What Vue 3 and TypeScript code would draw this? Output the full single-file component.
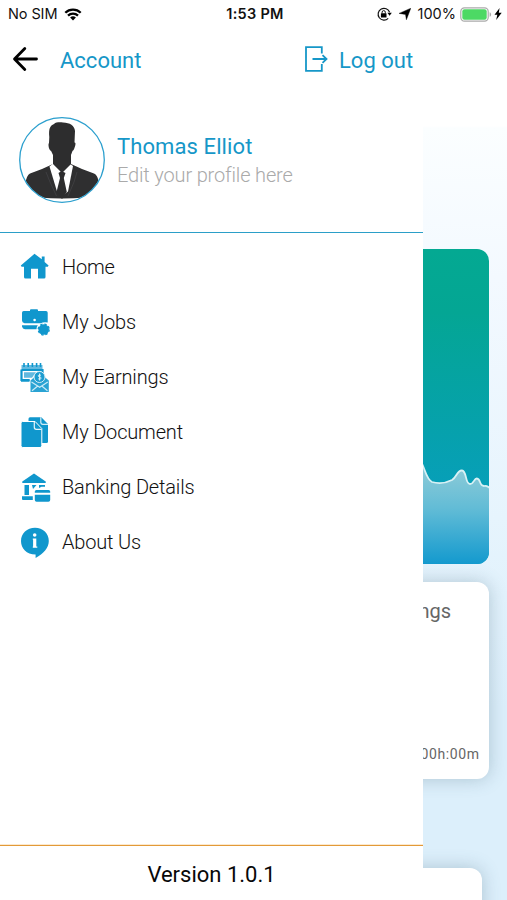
<script setup lang="ts">
type IconName = 'home' | 'jobs' | 'earnings' | 'document' | 'bank' | 'about'

interface MenuItem {
  label: string
  icon: IconName
}

const menu: MenuItem[] = [
  { label: 'Home', icon: 'home' },
  { label: 'My Jobs', icon: 'jobs' },
  { label: 'My Earnings', icon: 'earnings' },
  { label: 'My Document', icon: 'document' },
  { label: 'Banking Details', icon: 'bank' },
  { label: 'About Us', icon: 'about' },
]
</script>

<template>
  <div class="screen">
    <header class="status">
      <div class="status-left">
        <span class="carrier">No SIM</span>
        <svg class="wifi" viewBox="0 0 18 13" width="18" height="13">
          <path d="M1.3 4.700a11 11 0 0 1 15.400 0M4 7.600a7.200 7.200 0 0 1 10 0" fill="none" stroke="#000" stroke-width="2.300" />
          <path d="M6.100 9.600a4.200 4.200 0 0 1 5.800 0L9 12.500z" />
        </svg>
      </div>
      <span class="clock">1:53 PM</span>
      <div class="status-right">
        <svg viewBox="0 0 15 14" width="15" height="14">
          <path d="M12.600 5.300A5.900 5.900 0 1 0 11.200 11.400" fill="none" stroke="#111" stroke-width="1.200" />
          <path d="M10.400 5.800h4.400l-2.200 3z" />
          <rect x="3.900" y="6.200" width="5.600" height="4.200" rx=".5" />
          <path d="M5.100 6.500V5.200a1.600 1.600 0 0 1 3.200 0v1.300" fill="none" stroke="#111" stroke-width="1" />
        </svg>
        <svg class="location" viewBox="0 0 12 12" width="12" height="12">
          <path d="M11.800.2 7.400 11.800 6.500 6.400 0 5.400z" stroke="#000" stroke-width=".4" />
        </svg>
        <span class="percent">100%</span>
        <svg class="battery" viewBox="0 0 32 15" width="32" height="15">
          <rect x=".8" y=".8" width="27.400" height="13.400" rx="3.600" fill="#fff" stroke="#aaa" stroke-width="1.200" />
          <rect x="2.300" y="2.300" width="24.400" height="10.400" rx="2.200" fill="#4cd964" />
          <path d="M29.600 5.200c2 .7 2 3.900 0 4.600z" fill="#aaa" />
        </svg>
        <svg class="bolt" viewBox="0 0 8 12" width="8" height="12">
          <path d="M5.600 0 .5 6.800h2.800L2.200 12 7.700 4.800H4.800z" />
        </svg>
      </div>
    </header>

    <div class="body">
      <aside class="drawer">
        <div class="topbar">
          <svg class="back" viewBox="0 0 26 26" width="26" height="26">
            <path d="M24.500 13H3M12.800 2.500 2.500 13l10.300 10.500" fill="none" stroke="#000" stroke-width="2.800" stroke-linecap="round" stroke-linejoin="round" />
          </svg>
          <span class="title">Account</span>
          <svg class="exit" viewBox="0 0 24 26" width="24" height="26">
            <path d="M16.800 7.500V1.200H1v23.600h15.800V18M7.500 13h14M17.500 9.200l4 3.800-4 3.800" fill="none" stroke="#1697c8" stroke-width="1.800" />
          </svg>
          <span class="logout">Log out</span>
        </div>

        <div class="profile">
          <svg class="avatar" viewBox="0 0 86 86" width="86" height="86">
            <defs>
              <clipPath id="avatar-clip"><circle cx="43" cy="43" r="42" /></clipPath>
            </defs>
            <circle cx="43" cy="43" r="42.300" fill="#fff" />
            <g clip-path="url(#avatar-clip)">
              <path d="M34 47 23 52 11 56.500Q7.500 58.500 6.500 66L4 74 20 80.500Q43 82.500 66 80.500L82 74 79.500 64Q78.500 58 75 56.500L63 52 52 47z" fill="#2f2f30" />
              <path d="m33.500 47-3 2.500 7.500 25 5 5 6-5 5-25.500-3-2z" fill="#fff" />
              <path d="M30.300 20C29.500 12 31 8.500 35 7c2-2 6-1.700 9-1.500 7 .3 11.500 3 12 8.500l-.5 11.500c1.600-.2 1 3 .1 5-.5 2-1.200 3-2 3.200L52 38v9l-9 9-9-9V38l-1.900-4c-1.900-.5-3.400-6.500-2.100-8z" fill="#2d2d2e" />
              <path d="m39.500 56 3-2 4 2-1.700 5 3 14-4.800 7-5.500-7 3.500-14z" fill="#2d2d2e" />
              <path d="m27 55 4 10 6.500 14M58 55l-3 10-6 14" fill="none" stroke="#454547" stroke-width=".7" />
            </g>
            <circle cx="43" cy="43" r="42.300" fill="none" stroke="#2b9fce" stroke-width="1.300" />
          </svg>
          <div class="who">
            <span class="name">Thomas Elliot</span>
            <span class="hint">Edit your profile here</span>
          </div>
        </div>

        <nav class="menu">
          <a v-for="item in menu" :key="item.icon" class="item">
            <svg class="icon" viewBox="0 0 30 30" width="30" height="30">
              <g v-if="item.icon === 'home'">
                <path d="M14.500 1.800.8 13.600l.8 1.200H4V25q0 1.500 1.500 1.500H11v-9.800h7v9.800h6q1.500 0 1.500-1.500V14.800h2.300l.8-1.200-4-3.500V4.500h-2.800v2.800z" />
              </g>
              <g v-else-if="item.icon === 'jobs'">
                <path d="M10 4V3.200Q10 2.200 11 2.200h6q1 0 1 1V4h8q1.700 0 1.700 1.700v9.800q-4-.8-7 .7H4.500Q2 15.500 2 13.500V5.700Q2 4 3.700 4z" />
                <path d="M2 18.300h15.800q-1.300 1.500-1.300 3.900H5Q2.500 22 2 19.500z" />
                <circle cx="14.600" cy="13" r="1.300" fill="#fff" />
                <circle cx="23.700" cy="22.500" r="5.300" />
                <circle cx="23.700" cy="22.500" r="5.500" fill="none" stroke="#1097cd" stroke-width="1.300" stroke-dasharray="2.400 1.920" />
              </g>
              <g v-else-if="item.icon === 'earnings'">
                <path d="M1.500 3H22.500v4H1.500z" fill="#62b9df" />
                <path d="M4 1v4M8.200 1v4M12.400 1v4M16.600 1v4M20.500 1v4" stroke="#1097cd" stroke-width="1.600" />
                <path d="M1.500 8h21v3M1.500 7.500V18h8.200" fill="none" stroke="#1097cd" stroke-width="2.200" />
                <path d="M4 10.300h12l-4 5.500H4z" fill="#62b9df" />
                <path d="M1 19h8.500" stroke="#1097cd" stroke-width="1.500" />
                <path d="M10.500 18.500 15 14.500h9l4.800 4V30H10.500z" fill="#2aa3d3" />
                <circle cx="19.500" cy="15" r="5.500" fill="#1c9cd0" stroke="#d8edf6" stroke-width="1" />
                <path d="M20.900 13.300c-2.800-1-3.700 1.200-1.200 1.700s1.600 2.700-1.400 1.900M19.600 11.500v7" stroke="#e4f5fb" stroke-width="1" fill="none" />
                <path d="m11.500 20 8.200 5.300L27.800 20M12 28.700l6-5M27.500 28.700l-6-5" stroke="#caeaf6" stroke-width="1.200" fill="none" />
              </g>
              <g v-else-if="item.icon === 'document'">
                <path d="M10 .3h11.300l6.700 6.700v17.500q0 1.500-1.500 1.500H8.500V1.800Q8.500.3 10 .3z" />
                <path d="M20.800.3v5q0 2 2 2h5.200" fill="none" stroke="#d4edf7" stroke-width="1.200" />
                <path d="M2.600 4.500h12.500l6.700 7v17.200q0 1.800-1.800 1.800H2.800Q1 30.500 1 28.700V6.100q0-1.600 1.600-1.600z" stroke="#fff" stroke-width="1" />
                <path d="M14.300 5v5.300q0 2 2 2h5.200" fill="none" stroke="#e4f4fa" stroke-width="1.200" />
              </g>
              <g v-else-if="item.icon === 'bank'">
                <path d="m14 1.500 11.700 8q1 1.300-.7 1.500H3q-1.600-.2-.7-1.500z" />
                <path d="M4.500 13H9v10H4.500zM12 13h4.500l-3.500 4zM19 13h6v1.800h-3.500L19 16z" />
                <path d="M2 24.200h10.800V28H3Q2 28 2 27z" />
                <path d="M14.800 19.600q0-1.600 1.600-1.600h12.200q1.600 0 1.600 1.600v1.200H14.800zM14.800 22.800h15.400V28q0 1.800-1.800 1.800H16.600q-1.800 0-1.800-1.800z" />
              </g>
              <g v-else>
                <path d="M15 .8c8 0 13.800 5.700 13.800 13.200 0 7-5.300 12.500-13.200 17v-3.500C6.500 27.500 1 21.500 1 14S7 .8 15 .8z" />
                <path d="M12.800 11.500h3.500v8h1v1.300h-4.500v-1.300h.3v-6.700h-.3z" fill="#fff" />
                <circle cx="14.700" cy="8" r="1.800" fill="#fff" />
              </g>
            </svg>
            <span class="label">{{ item.label }}</span>
          </a>
        </nav>

        <footer class="version"><span>Version 1.0.1</span></footer>
      </aside>

      <main class="peek">
        <section class="chart">
          <svg viewBox="0 0 66 315" width="66" height="315">
            <defs>
              <linearGradient id="sea" x1="0" y1="0" x2="0" y2="1">
                <stop offset="0" stop-color="#93cdd8" />
                <stop offset=".45" stop-color="#62bcd6" />
                <stop offset="1" stop-color="#1299ce" />
              </linearGradient>
            </defs>
            <path d="M-2 213C2 219 3 230 9 233Q19 236 29 231C34 228 34 221 39 221.500C44 222 42 235 47 235C51 235 51 229 54 229.500C58 230 56 237 61 237Q64 236 68 240V316H-2z" fill="url(#sea)" />
            <path d="M-2 213C2 219 3 230 9 233Q19 236 29 231C34 228 34 221 39 221.500C44 222 42 235 47 235C51 235 51 229 54 229.500C58 230 56 237 61 237Q64 236 68 240" fill="none" stroke="#d8f1f5" stroke-width="1.800" />
          </svg>
        </section>
        <section class="card earnings">
          <span class="card-title">Earnings</span>
          <span class="hours">00h:00m</span>
        </section>
        <section class="card next"></section>
      </main>
    </div>
  </div>
</template>

<style>
body {
  margin: 0;
  background: #fff;
}
</style>

<style scoped>
.screen {
  width: 507px;
  height: 900px;
  overflow: hidden;
  background: #fff;
  font-family: Roboto, "Liberation Sans", sans-serif;
  white-space: nowrap;
}
svg {
  display: block;
  flex: none;
}
.status {
  display: grid;
  grid-template-columns: 1fr auto 1fr;
  align-items: center;
  height: 28px;
  padding: 0 5px 0 8px;
  box-sizing: border-box;
  font: 400 14.500px/28px Inter, "Liberation Sans", sans-serif;
  color: #111;
}
.status-left,
.status-right {
  display: flex;
  align-items: center;
}
.carrier {
  letter-spacing: -0.1px;
}
.wifi {
  margin-left: 7px;
}
.clock {
  font-weight: 600;
  letter-spacing: 0.3px;
}
.status-right {
  justify-content: flex-end;
}
.location {
  margin: 0 7px;
}
.battery {
  margin-left: 4px;
}
.bolt {
  margin-left: 2px;
}
.body {
  display: flex;
  height: 872px;
}
.drawer {
  display: flex;
  flex-direction: column;
  flex: none;
  width: 423px;
}
.topbar {
  display: flex;
  align-items: center;
  height: 64px;
  padding-left: 12px;
  color: #1697c8;
  font-size: 22px;
}
.title {
  width: 245px;
  margin-left: 22px;
}
.logout {
  margin-left: 10px;
}
.back,
.exit {
  margin-top: -2px;
}
.profile {
  display: flex;
  align-items: center;
  height: 140px;
  padding: 0 0 0 19px;
  border-bottom: 1px solid #2b9fc8;
}
.avatar {
  margin-bottom: 5px;
}
.who {
  display: flex;
  flex-direction: column;
  margin: 0 0 3px 12px;
}
.name {
  font-size: 22px;
  line-height: 30px;
  letter-spacing: 0.1px;
  color: #1697c8;
}
.hint {
  font-size: 20px;
  line-height: 27px;
  font-weight: 300;
  letter-spacing: -0.16px;
  color: #aaa;
}
.menu {
  display: flex;
  flex-direction: column;
  flex: 1;
  padding-top: 6px;
}
.item {
  display: flex;
  align-items: center;
  height: 55px;
  padding-left: 20px;
}
.icon {
  fill: #1097cd;
  overflow: visible;
}
.label {
  margin-left: 12px;
  font-size: 20px;
  font-weight: 300;
  letter-spacing: -0.17px;
  color: #111;
}
.version {
  height: 54px;
  border-top: 1px solid #e39a38;
  box-shadow: 0 -1px 0 #fbe9cf;
  text-align: center;
  font-size: 22px;
  line-height: 57px;
  color: #080808;
}
.peek {
  display: flex;
  flex-direction: column;
  align-items: flex-end;
  flex: 1;
  min-width: 0;
  box-sizing: border-box;
  padding: 221px 18px 0 0;
  overflow: hidden;
  background: linear-gradient(#fff 0, #fff 98px, #fbfeff 100px, #f3f9ff 250px, #e6f4fd 490px, #dceffb 680px, #dceffb 100%);
}
.chart {
  flex: none;
  width: 66px;
  height: 315px;
  overflow: hidden;
  border-radius: 0 12px 12px 0;
  background: linear-gradient(#04a992 0, #04a694 20%, #079fb8 75%);
}
.card {
  display: flex;
  flex: none;
  flex-direction: column;
  justify-content: space-between;
  align-items: flex-end;
  box-sizing: border-box;
  width: 190px;
  border-radius: 12px;
  background: #fff;
  box-shadow: 0 0 18px rgba(70, 105, 125, 0.32);
  color: #666;
}
.earnings {
  height: 197px;
  margin-top: 18px;
  padding: 16px 10px 14px 0;
}
.card-title {
  margin-right: 28px;
  font-size: 20px;
  line-height: 27px;
}
.hours {
  font-size: 14px;
  line-height: 21px;
  letter-spacing: 0.6px;
  margin-right: -0.6px;
}
.next {
  height: 160px;
  margin: 89px 7px 0 0;
}
</style>
